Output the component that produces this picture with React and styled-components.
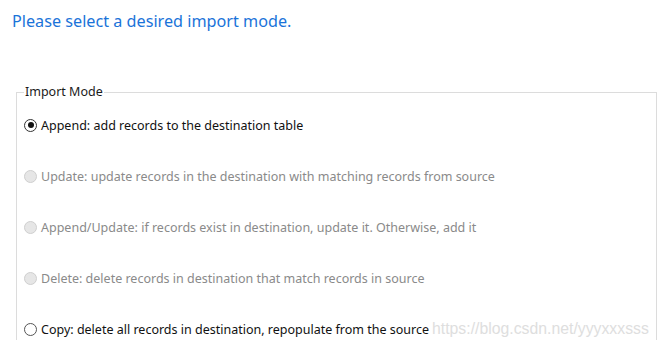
import React from "react";
import styled, { createGlobalStyle } from "styled-components";

const Global = createGlobalStyle`
  html, body { margin: 0; padding: 0; background: #ffffff; }
  body { font-family: "Noto Sans", "Microsoft YaHei", sans-serif; overflow: hidden; }
`;

const Page = styled.div`
  width: 657px;
  height: 349px;
  position: relative;
  overflow: hidden;
  background: #fff;
`;

const Heading = styled.h1`
  margin: 0;
  padding: 10px 0 0 12px;
  height: 32px;
  font-size: 16.2px;
  font-weight: 400;
  color: #1a73d9;
  line-height: 22px;
`;

const Group = styled.fieldset`
  margin: 42px 0 0 16px;
  padding: 0 0 0 7px;
  border: 1px solid #dcdcdc;
  border-bottom: none;
  width: 632px;
  min-width: 0;
`;

const Legend = styled.legend`
  padding: 0 1px 0 1px;
  margin-left: 0;
  font-size: 12.5px;
  color: #1a1a1a;
  line-height: 16px;
`;

const Options = styled.div`
  display: flex;
  flex-direction: column;
  gap: 30.5px;
  padding-top: 15px;
`;

const Row = styled.label`
  display: flex;
  align-items: center;
  height: 20.5px;
  gap: 4px;
  font-size: 12.5px;
  color: ${(p) => (p.disabled ? "#8a8a8a" : "#111")};
  white-space: nowrap;
`;

const Radio = styled.span`
  width: 11px;
  height: 11px;
  border-radius: 50%;
  flex: none;
  position: relative;
  border: 1px solid ${(p) => (p.disabled ? "#cfcfcf" : p.checked ? "#333" : "#555")};
  background: ${(p) => (p.disabled ? "#e6e6e6" : "#fff")};
  &::after {
    content: "";
    display: ${(p) => (p.checked ? "block" : "none")};
    position: absolute;
    left: 2.5px;
    top: 2.5px;
    width: 6px;
    height: 6px;
    border-radius: 50%;
    background: #111;
  }
`;

const Watermark = styled.span`
  position: absolute;
  left: 432px;
  top: 320px;
  font-family: "Liberation Sans", Arial, sans-serif;
  font-size: 15.8px;
  color: #dedede;
  pointer-events: none;
`;

const options = [
  { text: "Append: add records to the destination table", checked: true },
  { text: "Update: update records in the destination with matching records from source", disabled: true },
  { text: "Append/Update: if records exist in destination, update it. Otherwise, add it", disabled: true },
  { text: "Delete: delete records in destination that match records in source", disabled: true },
  { text: "Copy: delete all records in destination, repopulate from the source" },
];

export default function App() {
  return (
    <Page>
      <Global />
      <Heading>Please select a desired import mode.</Heading>
      <Group>
        <Legend>Import Mode</Legend>
        <Options>
          {options.map((o) => (
            <Row key={o.text} disabled={o.disabled}>
              <Radio checked={o.checked} disabled={o.disabled} />
              <span>{o.text}</span>
            </Row>
          ))}
        </Options>
      </Group>
      <Watermark>https://blog.csdn.net/yyyxxxsss</Watermark>
    </Page>
  );
}
